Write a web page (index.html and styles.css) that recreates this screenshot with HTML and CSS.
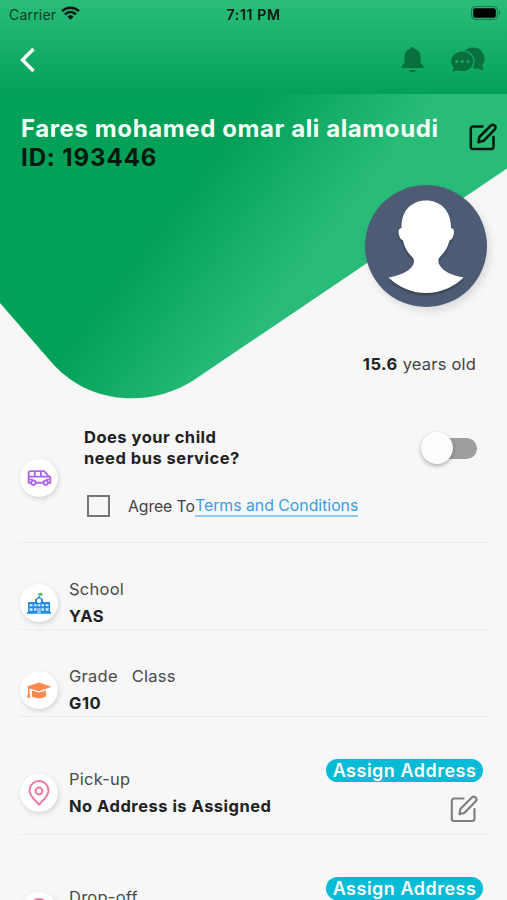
FILE: index.html
```html
<!DOCTYPE html>
<html lang="en">
<head>
<meta charset="utf-8">
<meta name="viewport" content="width=device-width, initial-scale=1">
<title>Student profile</title>
<link rel="stylesheet" href="styles.css">
</head>
<body>
<svg class="defs" width="0" height="0" aria-hidden="true">
  <symbol id="edit" viewBox="0 0 28 28">
    <path d="M13.500 3.500H4a2.200 2.200 0 0 0-2.200 2.200V23.800A2.200 2.200 0 0 0 4 26H22.300a2.200 2.200 0 0 0 2.200-2.200V14"/>
    <path d="M9.500 19.200l.8-5.200L21.800 2.600c2.500-2.300 6.200.9 4 3.700L14.600 17.800z"/>
  </symbol>
  <symbol id="pin" viewBox="0 0 22 26">
    <path d="M11 24.500C7 20.500 1.500 16 1.500 10.600a9.500 9.500 0 0 1 19 0C20.500 16 15 20.500 11 24.500z"/>
    <circle cx="11" cy="11" r="3.400"/>
  </symbol>
</svg>
<header class="top">
  <div class="status">
    <div class="carrier">Carrier
      <svg width="19" height="14" viewBox="0 0 19 14"><g fill="none" stroke="#06170e" stroke-width="2.500"><path d="M1 5.200a12.200 12.200 0 0 1 17 0M4 8.300a7.800 7.800 0 0 1 11 0"/></g><path d="M6.400 10.600a4.400 4.400 0 0 1 6.200 0L9.500 13.700z" fill="#06170e"/></svg>
    </div>
    <div class="time">7:11 PM</div>
    <svg class="battery" width="30" height="14" viewBox="0 0 30 14"><rect x=".6" y=".6" width="25.800" height="12.800" rx="3.500" fill="none" stroke="#167444"/><rect x="2.200" y="2.300" width="22.600" height="9.400" rx="2" fill="#000"/><path d="M28 4.600c1.700.8 1.700 4 0 4.800z" fill="#167444"/></svg>
  </div>
  <nav class="bar">
    <svg width="16" height="26" viewBox="0 0 16 26"><path d="M13.500 2L2.500 13l11 11" fill="none" stroke="#fff" stroke-width="3.400"/></svg>
    <div class="actions">
      <svg width="23" height="26" viewBox="0 0 23 26" fill="#08703f"><path d="M11.500 0c1.100 0 1.700.7 1.700 1.800 3.900.9 6.300 4 6.300 8v6l3.300 4.200v1H.2v-1L3.500 15.800v-6c0-4 2.400-7.100 6.300-8C9.800.7 10.400 0 11.500 0zM8 23h7c-.7 3-6.300 3-7 0z"/></svg>
      <svg width="35" height="27" viewBox="0 0 35 27"><path d="M13 6C15.500 1.800 19 .5 23 .5c6.500 0 11.500 4.600 11.500 10.700 0 3-.9 5.300-2.200 7l1.200 5.300-5.700-2.300-3.500.6z" fill="#08703f"/><path d="M12.200 4C5.300 4 .5 8.600.5 14.200c0 2.500.7 4.600 2.300 6.400L1.700 26l5.400-2.200c1.600.7 3.300 1 5.100 1 7 0 11.700-4.600 11.700-10.500S19.100 4 12.200 4z" fill="#08703f" stroke="#16ab67" stroke-width="1.200"/><g fill="#16a865"><circle cx="6.600" cy="14.500" r="1.500"/><circle cx="12.300" cy="14.500" r="1.500"/><circle cx="18" cy="14.500" r="1.500"/></g></svg>
    </div>
  </nav>
</header>
<section class="hero">
  <svg class="shape" width="507" height="306" viewBox="0 94 507 306">
    <defs><linearGradient id="green" gradientUnits="userSpaceOnUse" x1="166" y1="222" x2="276" y2="307"><stop offset="0" stop-color="#03a058"/><stop offset="1" stop-color="#29bc79"/></linearGradient></defs>
    <path d="M0 94H507V168.500L194 380C151 408 90 405 53 364L0 303z" fill="url(#green)"/>
  </svg>
  <div class="identity">
    <div>
      <h1 class="name">Fares mohamed omar ali alamoudi</h1>
      <div class="sid">ID: 193446</div>
    </div>
    <svg class="edit dark"><use href="#edit"/></svg>
  </div>
  <div class="avatar">
    <svg width="122" height="122" viewBox="0 0 122 122"><path class="person" d="M61 15.500c-15 0-25 11-24.500 27.500-3 .5-3.500 3-2.500 7 .8 3.500 2.300 4.700 4 5.500 2 8.500 5.500 13 10 17.500 1.500 2 1 5 0 7-4 7-14 10.500-24.500 12.500C33.500 102 46 108 61 108s28-6 37.500-15.500C88 90.500 78.500 87 74.500 80c-1.500-3-1.500-5.500 0-7.500 4.500-4.500 8-9 10-17 2-.8 3.200-2 4-5.500 1-4 .5-6.500-2.500-7C86.500 26.500 76 15.500 61 15.500z"/></svg>
  </div>
  <div class="age"><b>15.6</b> years old</div>
</section>
<main class="list">
  <section class="row bus">
    <div class="badge"><svg width="25" height="16" viewBox="0 0 26 17" fill="none" stroke="#a866ee" stroke-width="2"><path d="M4 13.500H1.500V3A1.800 1.800 0 0 1 3.300 1.200H18l4.500 5.300 2 1.300v5.700h-2M9 13.500h8M1.500 7h21M8 1.500V7M14.500 1.500V7"/><path d="M2 10h4m14 0h4" stroke-width="1.400"/><circle cx="6.500" cy="13.500" r="2.300"/><circle cx="19.700" cy="13.500" r="2.300"/></svg></div>
    <div class="busbody">
      <div class="question"><b>Does your child<br>need bus service?</b><span class="switch"><i></i></span></div>
      <div class="agree"><span class="check"></span><span class="agreetext">Agree To</span><a class="terms">Terms and Conditions</a></div>
    </div>
  </section>
  <section class="row short">
    <div class="badge"><svg width="24" height="22" viewBox="0 0 24 22"><path d="M12 5V1" stroke="#369ade"/><path d="M12.200.8h3.200v3h-3.200z" fill="#4fc65b"/><path d="M8 10V7.600L12 4.300l4 3.300V10h7v10h1v1.700H0V20h1V10z" fill="#228be6"/><circle cx="12" cy="8.700" r="2.200" fill="#fff"/><path d="M2.500 12.300h3v2h-3zm4.500 0h2.500v2H7zm7.500 0H17v2h-2.500zm4 0h3v2h-3zm-16 4h3v2.400h-3zm4.500 0h2.500v2.400H7zm7.500 0H17v2.400h-2.500zm4 0h3v2.400h-3zM10.600 16h1v5.500h-1zm1.800 0h1v5.500h-1zM10.700 12.200h2.600v2h-2.600z" fill="#d7ebfc"/></svg></div>
    <div class="info"><span>School</span><b>YAS</b></div>
  </section>
  <section class="row short">
    <div class="badge"><svg width="26" height="17" viewBox="0 0 26 17" fill="#fd8950"><path d="M13 .5L25.500 4.700 13 9.200 3.500 6.500V10.500l.9 5.300H1.100L2 10.500V5.600L.5 4.700z"/><path d="M6 8.600l7 2 7-2v5.800c-3.700 2.400-10.300 2.400-14 0z"/></svg></div>
    <div class="info"><span class="pair"><span>Grade</span><span>Class</span></span><b>G10</b></div>
  </section>
  <section class="row address">
    <div class="badge"><svg class="pin"><use href="#pin"/></svg></div>
    <div class="info"><span>Pick-up</span><b>No Address is Assigned</b></div>
    <div class="side"><button class="assign">Assign Address</button><svg class="edit gray"><use href="#edit"/></svg></div>
  </section>
  <section class="row address last">
    <div class="badge"><svg class="pin"><use href="#pin"/></svg></div>
    <div class="info"><span>Drop-off</span></div>
    <div class="side"><button class="assign">Assign Address</button></div>
  </section>
</main>
</body>
</html>
```
FILE: styles.css
```css
* { box-sizing: border-box; }
body { margin: 0; width: 507px; height: 900px; overflow: hidden; background: #f7f7f7; color: #212121; font-family: Inter, "Liberation Sans", sans-serif; font-size: 16.5px; }
svg { display: block; flex: none; }
.defs { position: absolute; }
.top { height: 94px; background: linear-gradient(#2abd7a, #03a058); }
.status { height: 28px; display: grid; grid-template-columns: 1fr auto 1fr; align-items: center; padding: 0 6px 0 9px; color: #06170e; font-size: 14px; }
.carrier { display: flex; gap: 5px; align-items: center; letter-spacing: .2px; color: #0a3d24; }
.carrier svg { margin-top: -2px; }
.time { font-weight: 600; letter-spacing: .65px; margin-right: 3px; }
.battery { justify-self: end; margin-top: -2px; }
.bar { height: 64px; padding: 0 22px 0 20px; display: flex; align-items: center; justify-content: space-between; }
.actions { display: flex; gap: 26px; align-items: center; }
.hero { height: 306px; position: relative; }
.shape { position: absolute; inset: 0; }
.identity { position: relative; height: 91px; padding: 20px 10px 0 21px; display: flex; justify-content: space-between; }
.name, .sid { margin: 0; font-size: 24px; line-height: 29px; font-weight: 700; letter-spacing: .6px; white-space: nowrap; }
.name { color: #f5fff9; }
.sid { color: #03180e; letter-spacing: .9px; }
.edit { width: 28px; height: 28px; fill: none; stroke-width: 2.5; stroke-linecap: round; stroke-linejoin: round; }
.dark { stroke: #03180e; margin-top: 9px; }
.gray { stroke: #7e7e7e; stroke-width: 2.1; }
.avatar { position: relative; width: 122px; height: 122px; margin-left: 365px; border-radius: 50%; background: #4d5b74; box-shadow: 3px 4px 8px rgba(0,0,0,.12); }
.person { fill: #fff; filter: drop-shadow(0 2px 1px rgba(0,0,0,.3)); }
.age { margin: 47px 31px 0 0; text-align: right; line-height: 20px; letter-spacing: .2px; color: #444; }
.age b { color: #212121; }
b { font-weight: 700; letter-spacing: .5px; }
.list { padding: 0 18px 0 20px; }
.row { display: flex; border-bottom: 1px solid #ebebeb; }
.badge { flex: none; width: 38px; height: 38px; border-radius: 50%; background: #fff; box-shadow: 1px 2px 5px rgba(0,0,0,.15); display: flex; align-items: center; justify-content: center; }
.bus { height: 143px; }
.bus .badge { margin-top: 59px; }
.busbody { flex: 1; padding: 27px 12px 0 26px; }
.question { display: flex; justify-content: space-between; line-height: 21px; }
.switch { position: relative; width: 50px; height: 21px; margin-top: 11px; border-radius: 11px; background: #9e9e9e; }
.switch i { position: absolute; left: -6px; top: -6px; width: 32px; height: 32px; border-radius: 50%; background: #fdfdfd; box-shadow: 0 2px 4px rgba(0,0,0,.3); }
.agree { margin-top: 26px; padding-left: 3px; display: flex; align-items: center; height: 22px; font-size: 15.8px; letter-spacing: 0; color: #424242; white-space: nowrap; }
.check { width: 23px; height: 22px; border: 2px solid #757575; }
.agreetext { margin-left: 18px; width: 67px; letter-spacing: -.1px; }
.terms { color: #3d9be6; border-bottom: 2px solid #90c8f5; line-height: 18px; margin-top: 2px; }
.short { height: 87px; }
.short .badge { margin-top: 41px; }
.info { margin-left: 11px; padding-top: 33px; line-height: 27px; display: flex; flex-direction: column; letter-spacing: .25px; color: #4a4a4a; white-space: nowrap; }
.info b { color: #212121; }
.pair { display: flex; gap: 14px; }
.address { height: 118px; }
.address .badge { margin-top: 57px; }
.address .info { padding-top: 49px; }
.last { height: 65px; overflow: hidden; border: 0; }
.pin { width: 22px; height: 26px; fill: none; stroke: #f276a3; stroke-width: 2; }
.side { margin: 42px 6px 0 auto; display: flex; flex-direction: column; align-items: flex-end; gap: 13px; }
.side .edit { margin-right: 5px; }
.assign { flex: none; width: 157px; height: 23px; border: 0; border-radius: 12px; padding: 0; background: #05bbd5; color: #fff; font: 600 18px/22px Inter, sans-serif; letter-spacing: .5px; white-space: nowrap; }
```
